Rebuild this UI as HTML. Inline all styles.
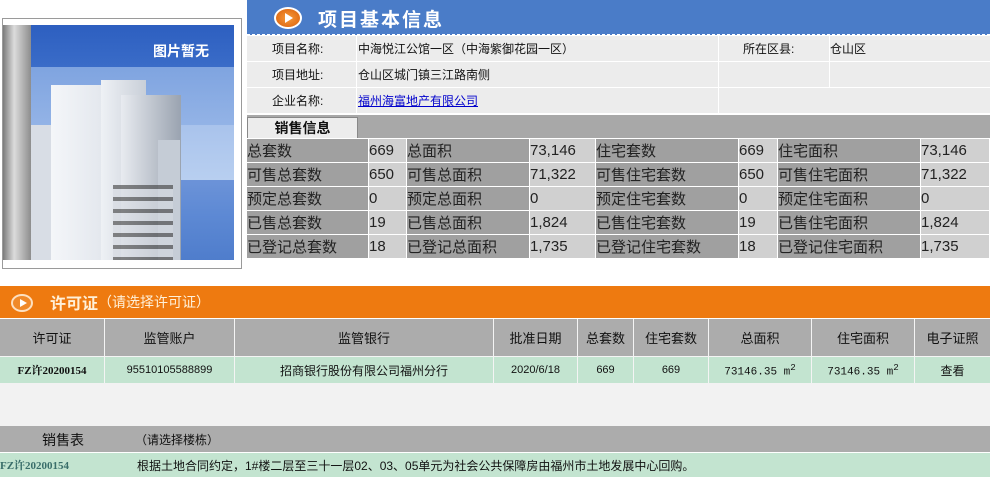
<!DOCTYPE html>
<html><head><meta charset="utf-8"><style>
*{margin:0;padding:0;box-sizing:border-box}
body{width:992px;height:477px;background:#fff;position:relative;overflow:hidden;font-family:"Liberation Sans","Noto Sans CJK SC",sans-serif;font-size:12px;color:#111}
.a{position:absolute}
.c{position:absolute;display:flex;align-items:center;white-space:nowrap}
.ctr{justify-content:center}
.s{font-size:15px;color:#222}
</style></head><body>
<div class="a" style="left:2px;top:18px;width:240px;height:251px;border:1px solid #9a9a9a;background:#fff"></div>
<div class="a" style="left:3px;top:25px;width:231px;height:235px;overflow:hidden;background:linear-gradient(#2d5fc0 0,#3a6cc8 42px,#7fa4e0 42px,#93b3e6 100px,#a9c3ec 100px,#b8cff0 155px,#6c93d8 155px,#5d89d4 190px,#4f7dcc 235px)">
 <div class="a" style="left:0;top:0;width:28px;height:235px;background:linear-gradient(90deg,#7b7b7b,#dcdcdc 40%,#8d8d8d)"></div>
 <div class="a" style="left:28px;top:100px;width:22px;height:135px;background:#d8dde5"></div>
 <div class="a" style="left:48px;top:60px;width:50px;height:175px;background:linear-gradient(90deg,#f4f6f9,#e4e8ee)"></div>
 <div class="a" style="left:98px;top:55px;width:45px;height:180px;background:linear-gradient(90deg,#eef1f5,#c9cfd8)"></div>
 <div class="a" style="left:118px;top:70px;width:60px;height:165px;background:linear-gradient(90deg,#e8ebf0,#9aa3b0)"></div>
 <div class="a" style="left:155px;top:115px;width:22px;height:120px;background:#c5ccd6"></div>
 <div class="a" style="left:110px;top:160px;width:60px;height:75px;background:repeating-linear-gradient(#3a3a3a 0 4px,#d5d9e0 4px 12px);opacity:.6"></div>
 <div class="c" style="left:150px;top:16px;color:#fff;font-size:14px;font-weight:bold">图片暂无</div>
</div>
<div class="a" style="left:247px;top:0;width:743px;height:35px;background:#4a7cc8;border-bottom:1px dashed #fff"></div>
<div class="a" style="left:274px;top:7px;width:28px;height:22px;border-radius:50%;background:radial-gradient(#f79a3a,#d95e0a);border:2px solid #fff"></div>
<div class="a" style="left:285px;top:13px;width:0;height:0;border-left:8px solid #fff;border-top:5px solid transparent;border-bottom:5px solid transparent"></div>
<div class="c" style="left:318px;top:6px;height:24px;color:#fff;font-size:19px;font-weight:bold;letter-spacing:2px">项目基本信息</div>
<div class="a" style="left:247px;top:36px;width:743px;height:77px;background:#ececec"></div>
<div class="a" style="left:247px;top:61px;width:743px;height:1px;background:#fff"></div>
<div class="a" style="left:247px;top:87px;width:743px;height:1px;background:#fff"></div>
<div class="a" style="left:356px;top:36px;width:1px;height:77px;background:#fff"></div>
<div class="a" style="left:718px;top:36px;width:1px;height:77px;background:#fff"></div>
<div class="a" style="left:829px;top:36px;width:1px;height:51px;background:#fff"></div>
<div class="c" style="left:272px;top:36px;height:25px">项目名称:</div>
<div class="c" style="left:358px;top:36px;height:25px">中海悦江公馆一区（中海紫御花园一区）</div>
<div class="c" style="left:743px;top:36px;height:25px">所在区县:</div>
<div class="c" style="left:830px;top:36px;height:25px">仓山区</div>
<div class="c" style="left:272px;top:62px;height:25px">项目地址:</div>
<div class="c" style="left:358px;top:62px;height:25px">仓山区城门镇三江路南侧</div>
<div class="c" style="left:272px;top:88px;height:25px">企业名称:</div>
<div class="c" style="left:358px;top:88px;height:25px;color:#00c;text-decoration:underline">福州海富地产有限公司</div>
<div class="a" style="left:247px;top:115px;width:743px;height:23px;background:#a8a8a8"></div>
<div class="c ctr" style="left:247px;top:117px;width:111px;height:21px;background:#ececec;border:1px solid #888;border-bottom:none;font-size:14px;font-weight:bold">销售信息</div>
<div id="st"></div>
<div class="a" style="left:0;top:286px;width:990px;height:32px;background:#ee7a10"></div>
<div class="a" style="left:11px;top:294px;width:22px;height:18px;border-radius:50%;background:#f08a2a;border:2px solid #fde0c0"></div>
<div class="a" style="left:20px;top:299px;width:0;height:0;border-left:7px solid #fff;border-top:4px solid transparent;border-bottom:4px solid transparent"></div>
<div class="c" style="left:50px;top:287px;height:30px;color:#fff0d8;font-size:16px;font-weight:bold">许可证<span style="font-weight:normal;font-size:14px">（请选择许可证）</span></div>
<div class="a" style="left:0;top:319px;width:990px;height:37px;background:#acacac"></div>
<div class="a" style="left:0;top:357px;width:990px;height:26px;background:#c3e4d0"></div>
<div class="a" style="left:0;top:383px;width:990px;height:43px;background:#f2f2f2"></div>
<div id="pt"></div>
<div class="a" style="left:0;top:426px;width:990px;height:26px;background:#acacac"></div>
<div class="c" style="left:42px;top:426px;height:28px;font-size:14px">销售表</div>
<div class="c" style="left:135px;top:426px;height:26px">（请选择楼栋）</div>
<div class="a" style="left:0;top:453px;width:990px;height:24px;background:#c3e4d0"></div>
<div class="c" style="left:0;top:453px;height:24px;font-family:'Liberation Serif','Noto Serif CJK SC',serif;font-weight:bold;font-size:11px;color:#3a6e6a">FZ许20200154</div>
<div class="c" style="left:137px;top:453px;height:24px;font-size:12px">根据土地合同约定，1#楼二层至三十一层02、03、05单元为社会公共保障房由福州市土地发展中心回购。</div>
<script>
var cols=[[247,122],[369,38],[407,123],[530,66],[596,143],[739,39],[778,143],[921,69]];
var rows=[["总套数","669","总面积","73,146","住宅套数","669","住宅面积","73,146"],["可售总套数","650","可售总面积","71,322","可售住宅套数","650","可售住宅面积","71,322"],["预定总套数","0","预定总面积","0","预定住宅套数","0","预定住宅面积","0"],["已售总套数","19","已售总面积","1,824","已售住宅套数","19","已售住宅面积","1,824"],["已登记总套数","18","已登记总面积","1,735","已登记住宅套数","18","已登记住宅面积","1,735"]];
var h="";
rows.forEach(function(r,i){var y=139+i*24;r.forEach(function(t,j){var c=cols[j];h+='<div class="c s" style="left:'+c[0]+'px;top:'+y+'px;width:'+(c[1]-1)+'px;height:23px;background:'+(j%2?'#d0d0d0':'#a0a0a0')+'">'+t+'</div>';});});
document.getElementById('st').outerHTML=h;
var pc=[0,105,235,494,578,634,709,812,915,991];
var hd=["许可证","监管账户","监管银行","批准日期","总套数","住宅套数","总面积","住宅面积","电子证照"];
var dt=['<b style="font-family:Liberation Serif,Noto Serif CJK SC,serif;font-size:11px">FZ许20200154</b>','<span style="font-size:11px">95510105588899</span>','招商银行股份有限公司福州分行','<span style="font-size:11px">2020/6/18</span>','<span style="font-size:11px">669</span>','<span style="font-size:11px">669</span>','<span style="font-family:Liberation Mono,monospace;font-size:11px">73146.35 m<sup>2</sup></span>','<span style="font-family:Liberation Mono,monospace;font-size:11px">73146.35 m<sup>2</sup></span>','查看'];
h="";
for(var k=0;k<9;k++){var x=pc[k],w=pc[k+1]-pc[k]-1;
h+='<div class="c ctr" style="left:'+x+'px;top:319px;width:'+w+'px;height:37px;font-size:13px">'+hd[k]+'</div>';
h+='<div class="c ctr" style="left:'+x+'px;top:357px;width:'+w+'px;height:26px">'+dt[k]+'</div>';
if(k<8)h+='<div class="a" style="left:'+(pc[k+1]-1)+'px;top:319px;width:1px;height:64px;background:#f4f4f4"></div>';}
h+='<div class="a" style="left:0;top:356px;width:990px;height:1px;background:#f4f4f4"></div>';
document.getElementById('pt').outerHTML=h;
</script>
</body></html>
